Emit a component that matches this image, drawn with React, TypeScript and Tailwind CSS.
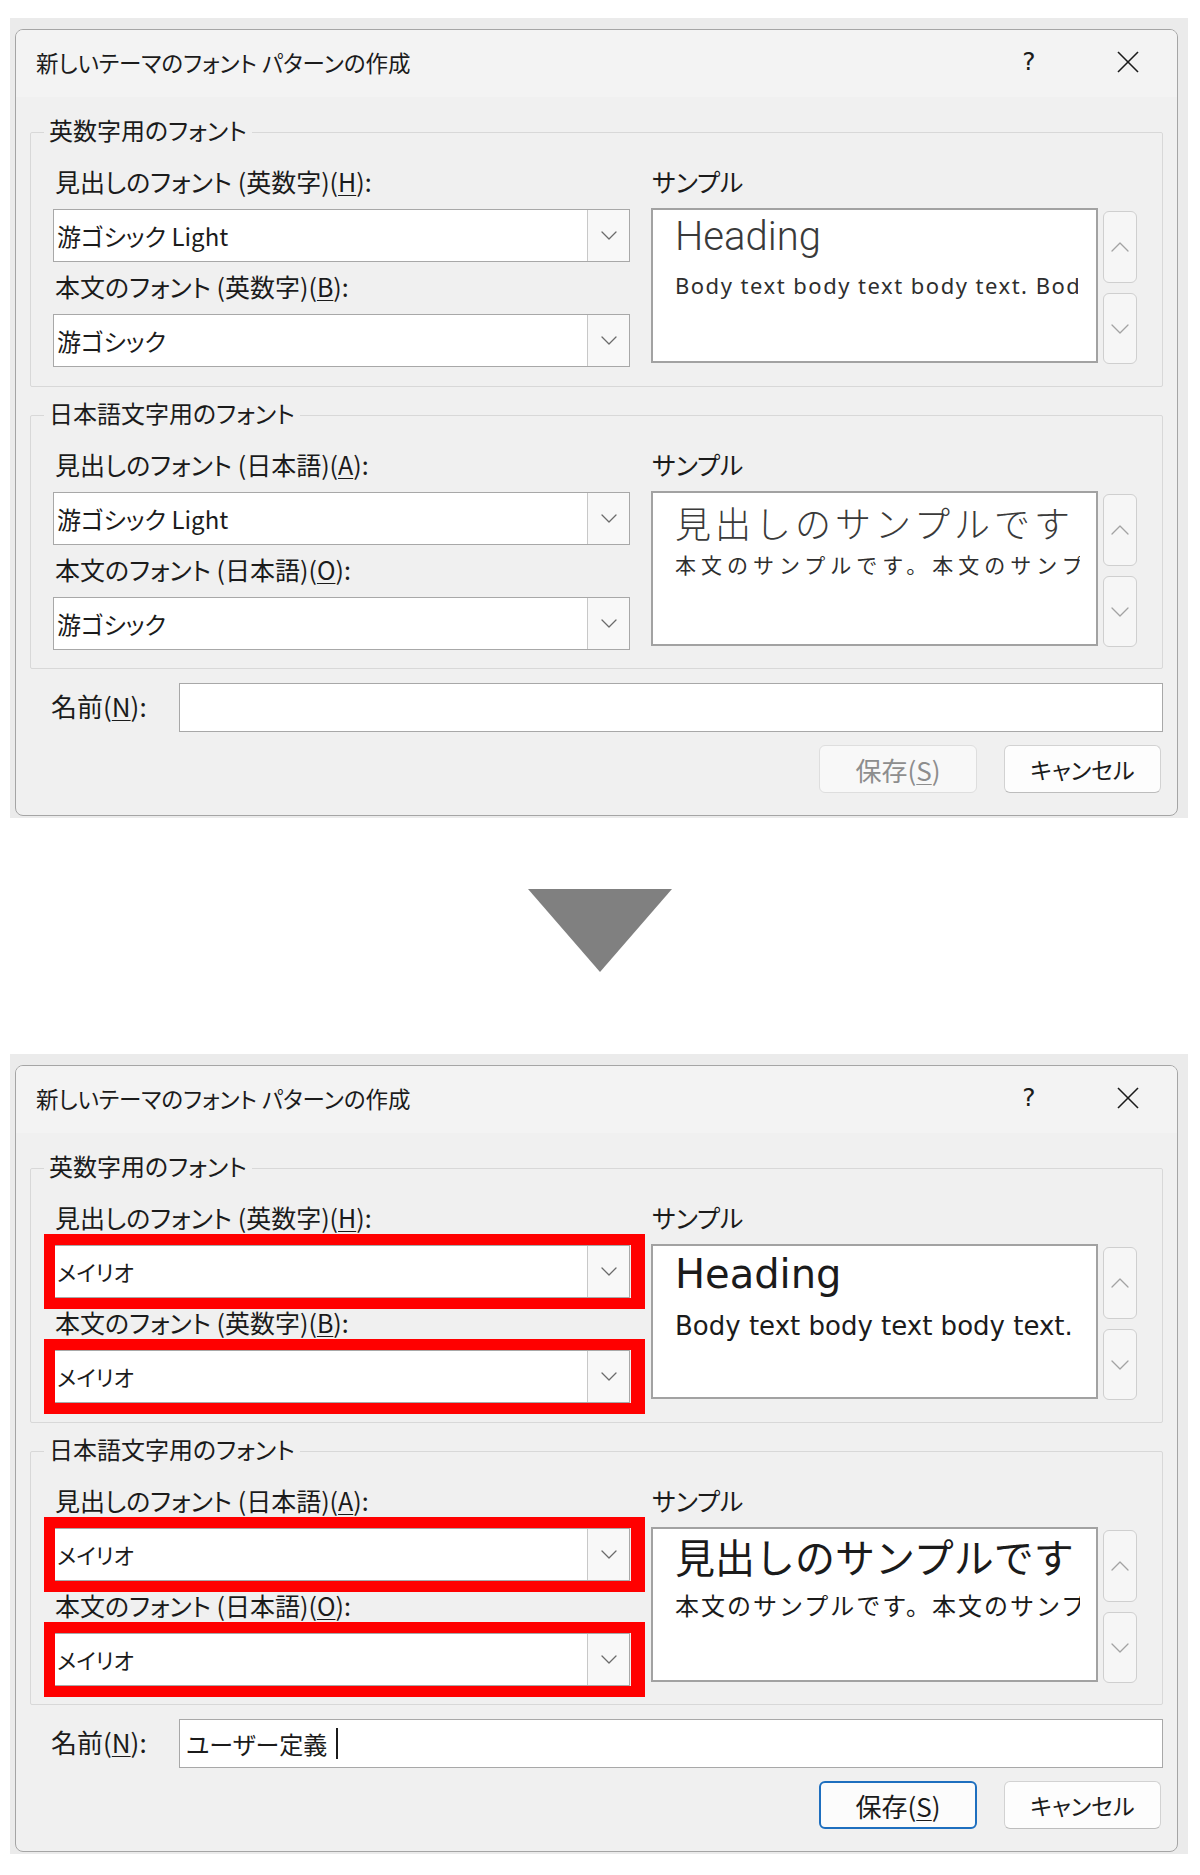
import React from "react";

type Variant = "before" | "after";

const ui = "font-['Noto_Sans_CJK_JP','Noto_Sans',sans-serif] [font-feature-settings:'palt']";
const plain = "[font-feature-settings:normal]";

function Chevron({ up = false, color = "#6b6b6b", w = 16 }: { up?: boolean; color?: string; w?: number }) {
  const h = w / 2 + 1;
  return (
    <svg width={w} height={h} viewBox={`0 0 ${w} ${h}`} fill="none">
      <polyline
        points={up ? `1,${h - 1} ${w / 2},1 ${w - 1},${h - 1}` : `1,1 ${w / 2},${h - 1} ${w - 1},1`}
        stroke={color}
        strokeWidth="1.3"
        strokeLinecap="round"
        strokeLinejoin="round"
      />
    </svg>
  );
}

function Key({ k }: { k: string }) {
  return <span className="underline underline-offset-[3px] decoration-[1px]">{k}</span>;
}

function Label({ children, className = "" }: { children: React.ReactNode; className?: string }) {
  return (
    <div className={`h-[30px] flex items-center text-[25px] leading-[30px] text-[#1b1b1b] whitespace-nowrap ${className}`}>
      {children}
    </div>
  );
}

function Combo({ value, marked }: { value: string; marked: boolean }) {
  const narrow = value === "メイリオ";
  return (
    <div className="relative h-[53px] w-[577px] flex border border-[#a8a8a8] bg-white">
      <div
        className={`flex-1 flex items-center pl-[3px] text-[#1b1b1b] whitespace-nowrap ${
          narrow ? "text-[22px]" : "text-[24px]"
        }`}
      >
        {value}
      </div>
      <div className="w-[42px] border-l border-[#c8c8c8] bg-[#f8f8f8] flex items-center justify-center">
        <Chevron />
      </div>
      {marked && (
        <span className="pointer-events-none absolute -top-[12px] -bottom-[12px] -left-[10px] -right-[16px] border-[11px] border-r-[14px] border-[#ff0000]" />
      )}
    </div>
  );
}

function Spin() {
  return (
    <div className="ml-[5px] w-[34px] pt-[3px] flex flex-col gap-[10px]">
      <div className="h-[72px] rounded-[6px] border border-[#cfcfcf] bg-[#f6f6f6] flex items-center justify-center">
        <Chevron up color="#a3a3a3" w={18} />
      </div>
      <div className="h-[71px] rounded-[6px] border border-[#cfcfcf] bg-[#f6f6f6] flex items-center justify-center">
        <Chevron color="#a3a3a3" w={18} />
      </div>
    </div>
  );
}

function SampleLatin({ variant }: { variant: Variant }) {
  if (variant === "before") {
    return (
      <div className={`pl-[22px] pt-[4px] overflow-hidden pr-[18px] ${plain}`}>
        <div className="h-[46px] leading-[46px] text-[40px] font-light font-['Roboto',sans-serif] text-[#3a3a3a] whitespace-nowrap">
          Heading
        </div>
        <div className="mt-[10px] h-[30px] leading-[30px] text-[22px] tracking-[1.5px] font-['Noto_Sans',sans-serif] text-[#2e2e2e] whitespace-nowrap overflow-hidden">
          Body text body text body text. Body text body text.
        </div>
      </div>
    );
  }
  return (
    <div className={`pl-[22px] pt-[4px] overflow-hidden pr-[18px] ${plain}`}>
      <div className="h-[48px] leading-[48px] text-[40px] font-['DejaVu_Sans',sans-serif] text-[#1b1b1b] whitespace-nowrap">
        Heading
      </div>
      <div className="mt-[12px] h-[32px] leading-[32px] text-[26px] font-['DejaVu_Sans',sans-serif] text-[#1b1b1b] whitespace-nowrap overflow-hidden">
        Body text body text body text.
      </div>
    </div>
  );
}

function SampleJapanese({ variant }: { variant: Variant }) {
  if (variant === "before") {
    return (
      <div className={`pl-[22px] pt-[6px] overflow-hidden pr-[16px] ${plain}`}>
        <div className="h-[46px] leading-[46px] text-[36px] tracking-[4px] font-light font-['Noto_Sans_CJK_JP',sans-serif] text-[#3a3a3a] whitespace-nowrap overflow-hidden">
          見出しのサンプルです
        </div>
        <div className="mt-[4px] h-[30px] leading-[30px] text-[21px] tracking-[5px] font-['Noto_Sans_CJK_JP',sans-serif] text-[#2e2e2e] whitespace-nowrap overflow-hidden">
          本文のサンプルです。本文のサンプルです。
        </div>
      </div>
    );
  }
  return (
    <div className={`pl-[22px] pt-[2px] overflow-hidden pr-[16px] ${plain}`}>
      <div className="h-[50px] leading-[50px] text-[40px] font-['Noto_Sans_CJK_JP',sans-serif] text-[#1b1b1b] whitespace-nowrap overflow-hidden">
        見出しのサンプルです
      </div>
      <div className="mt-[8px] h-[32px] leading-[32px] text-[24px] tracking-[2px] font-['Noto_Sans_CJK_JP',sans-serif] text-[#1b1b1b] whitespace-nowrap overflow-hidden">
        本文のサンプルです。本文のサンプルです。
      </div>
    </div>
  );
}

function Group({
  legend,
  height,
  labels,
  values,
  marked,
  sample,
}: {
  legend: string;
  height: string;
  labels: [React.ReactNode, React.ReactNode];
  values: [string, string];
  marked: boolean;
  sample: React.ReactNode;
}) {
  return (
    <div className={`relative ${height} border border-[#d8d8d8] rounded-[2px] flex pl-[22px]`}>
      <div className="absolute -top-[18px] left-[13px] px-[5px] bg-[#f0f0f0] h-[30px] leading-[30px] text-[24px] text-[#1b1b1b]">
        {legend}
      </div>
      <div className="w-[577px] pt-[33px] flex flex-col">
        <Label className="pl-[2px]">{labels[0]}</Label>
        <div className="mt-[13px]">
          <Combo value={values[0]} marked={marked} />
        </div>
        <Label className="mt-[9px] pl-[2px]">{labels[1]}</Label>
        <div className="mt-[13px]">
          <Combo value={values[1]} marked={marked} />
        </div>
      </div>
      <div className="ml-[21px] pt-[33px] flex flex-col">
        <Label className="pl-[1px] text-[24px]">サンプル</Label>
        <div className="mt-[12px] flex">
          <div className="w-[447px] h-[155px] border-2 border-[#a2a2a2] bg-white">{sample}</div>
          <Spin />
        </div>
      </div>
    </div>
  );
}

function FontDialog({ variant }: { variant: Variant }) {
  const after = variant === "after";
  const latin = after ? ["メイリオ", "メイリオ"] : ["游ゴシック Light", "游ゴシック"];
  const jp = after ? ["メイリオ", "メイリオ"] : ["游ゴシック Light", "游ゴシック"];
  return (
    <div className="ml-[10px] w-[1178px] h-[800px] bg-[#ebebeb] pl-[5px] pt-[11px]">
      <div className={`w-[1163px] h-[787px] rounded-[8px] border border-[#a5a5a5] bg-[#f0f0f0] overflow-hidden flex flex-col ${ui} text-[#1b1b1b]`}>
        {/* title bar */}
        <div className="h-[67px] shrink-0 bg-[#f3f3f3] flex items-center pl-[20px] pb-[4px]">
          <div className="text-[22.5px] leading-[30px] whitespace-nowrap">新しいテーマのフォント パターンの作成</div>
          <div className="ml-auto flex items-center">
            <div className="w-[40px] h-[40px] flex items-center justify-center text-[25px] font-['DejaVu_Sans',sans-serif] text-[#1b1b1b]">
              ?
            </div>
            <div className="ml-[59px] mr-[29px] w-[40px] h-[40px] flex items-center justify-center">
              <svg width="22" height="22" viewBox="0 0 22 22">
                <line x1="1" y1="1" x2="21" y2="21" stroke="#1b1b1b" strokeWidth="1.6" />
                <line x1="21" y1="1" x2="1" y2="21" stroke="#1b1b1b" strokeWidth="1.6" />
              </svg>
            </div>
          </div>
        </div>

        {/* body */}
        <div className="px-[14px] flex flex-col">
          <div className="mt-[35px]">
            <Group
              legend="英数字用のフォント"
              height="h-[255px]"
              labels={[
                <>見出しのフォント (英数字)(<Key k="H" />):</>,
                <>本文のフォント (英数字)(<Key k="B" />):</>,
              ]}
              values={[latin[0], latin[1]]}
              marked={after}
              sample={<SampleLatin variant={variant} />}
            />
          </div>
          <div className="mt-[28px]">
            <Group
              legend="日本語文字用のフォント"
              height="h-[254px]"
              labels={[
                <>見出しのフォント (日本語)(<Key k="A" />):</>,
                <>本文のフォント (日本語)(<Key k="O" />):</>,
              ]}
              values={[jp[0], jp[1]]}
              marked={after}
              sample={<SampleJapanese variant={variant} />}
            />
          </div>

          {/* name row */}
          <div className="mt-[14px] h-[49px] flex items-center">
            <div className="w-[149px] pl-[21px] pb-[4px] text-[26px] leading-[30px] whitespace-nowrap">
              名前(<Key k="N" />):
            </div>
            <div className="flex-1 h-[49px] border border-[#a8a8a8] bg-white flex items-center pl-[6px]">
              {after && (
                <>
                  <span className="text-[24px] leading-[30px] whitespace-nowrap">ユーザー定義</span>
                  <span className="ml-[9px] w-[2px] h-[31px] bg-[#1b1b1b]" />
                </>
              )}
            </div>
          </div>

          {/* buttons */}
          <div className="mt-[13px] flex justify-end pr-[2px] gap-[27px]">
            <div
              className={
                after
                  ? "w-[158px] h-[48px] rounded-[6px] border-2 border-[#1e6fbf] bg-[#fcfcfc] flex items-center justify-center text-[26px] text-[#1b1b1b]"
                  : "w-[158px] h-[48px] rounded-[6px] border border-[#dedede] bg-[#f8f8f8] flex items-center justify-center text-[26px] text-[#8d8d8d]"
              }
            >
              保存(<Key k="S" />)
            </div>
            <div className="w-[157px] h-[48px] rounded-[6px] border border-[#d2d2d2] border-b-[#bdbdbd] bg-[#fdfdfd] flex items-center justify-center text-[23px] text-[#1b1b1b]">
              キャンセル
            </div>
          </div>
        </div>
      </div>
    </div>
  );
}

export default function App() {
  return (
    <div className="w-[1200px] h-[1875px] bg-white pt-[18px]">
      <FontDialog variant="before" />
      <div className="h-[236px] flex justify-center pt-[71px]">
        <svg width="144" height="83" viewBox="0 0 144 83">
          <polygon points="0,0 144,0 72,83" fill="#808080" />
        </svg>
      </div>
      <FontDialog variant="after" />
    </div>
  );
}
